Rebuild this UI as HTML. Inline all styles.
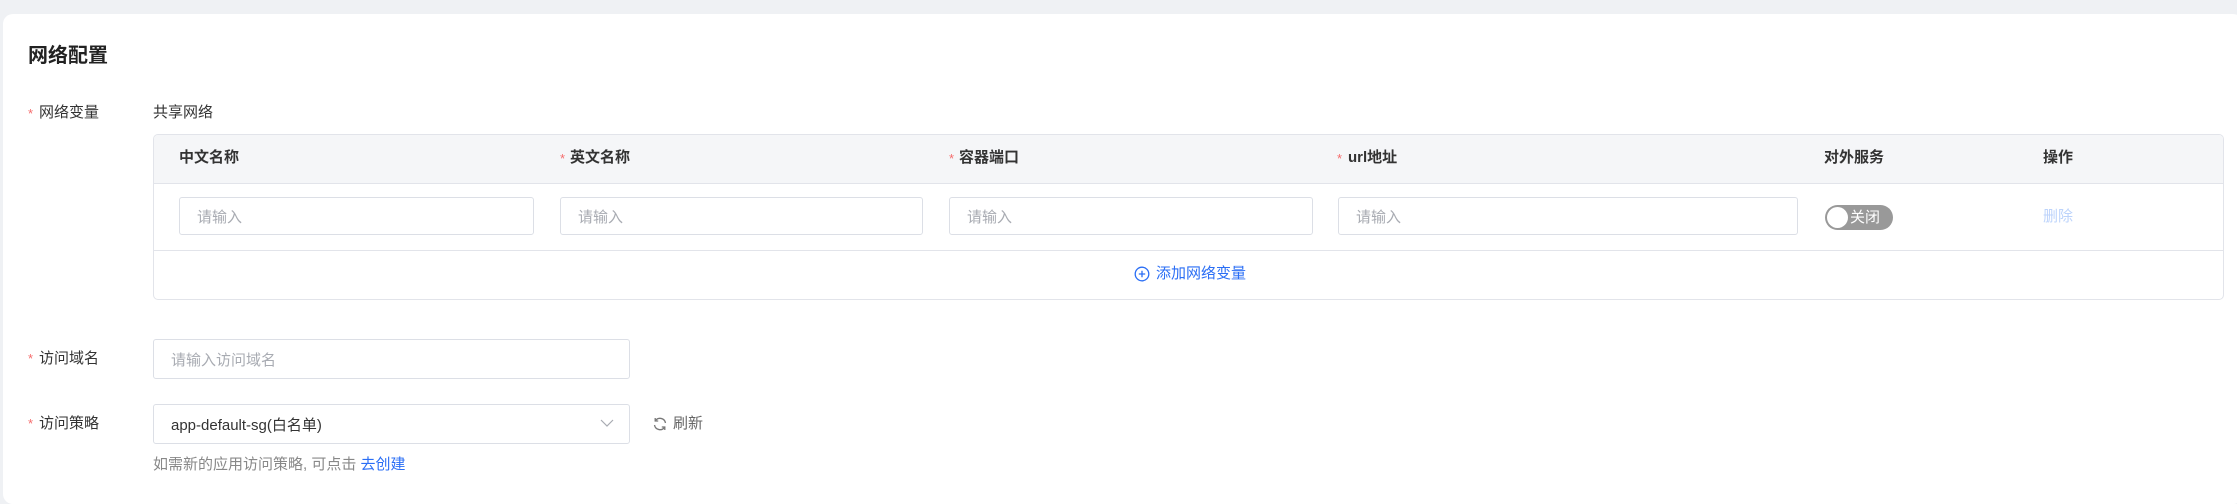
<!DOCTYPE html>
<html><head><meta charset="utf-8"><style>
*{box-sizing:border-box;margin:0;padding:0}
body{width:2237px;height:498px;background:#eff1f4;font-family:"Liberation Sans","Noto Sans CJK SC",sans-serif;position:relative;overflow:hidden;color:#333}
.card{position:absolute;left:3px;top:14px;width:2240px;height:490px;background:#fff;border-radius:10px}
.a{position:absolute;white-space:nowrap;line-height:1}
.lbl{font-size:15px;color:#333}
.star{color:#f56c6c;font-size:13px}
.title{font-size:20px;font-weight:bold;color:#222}
.th{font-size:15px;font-weight:bold;color:#333}
.inp{position:absolute;border:1px solid #dcdfe6;border-radius:3px;background:#fff;font-size:15px;color:#a8abb2;padding-left:17px;display:flex;align-items:center}
.tbl{position:absolute;left:153px;top:134px;width:2071px;height:166px;border:1px solid #e2e4ea;border-radius:5px;overflow:hidden}
.hd{position:absolute;left:0;top:0;right:0;height:49px;background:#f5f6f8;border-bottom:1px solid #e2e4ea}
.rw{position:absolute;left:0;top:49px;right:0;height:67px;border-bottom:1px solid #e2e4ea}
</style></head><body>
<div class="card"></div>
<div class="a title" style="left:28px;top:46px">网络配置</div>

<div class="a star" style="left:28px;top:107px">*</div>
<div class="a lbl" style="left:39px;top:105px">网络变量</div>
<div class="a lbl" style="left:153px;top:105px">共享网络</div>

<div class="tbl"><div class="hd"></div><div class="rw"></div></div>
<div class="a th" style="left:179px;top:150px">中文名称</div>
<div class="a star" style="left:560px;top:152px">*</div><div class="a th" style="left:570px;top:150px">英文名称</div>
<div class="a star" style="left:949px;top:152px">*</div><div class="a th" style="left:959px;top:150px">容器端口</div>
<div class="a star" style="left:1337px;top:152px">*</div><div class="a th" style="left:1348px;top:150px">url地址</div>
<div class="a th" style="left:1824px;top:150px">对外服务</div>
<div class="a th" style="left:2043px;top:150px">操作</div>

<div class="inp" style="left:179px;top:197px;width:355px;height:38px">请输入</div>
<div class="inp" style="left:560px;top:197px;width:363px;height:38px">请输入</div>
<div class="inp" style="left:949px;top:197px;width:364px;height:38px">请输入</div>
<div class="inp" style="left:1338px;top:197px;width:460px;height:38px">请输入</div>
<div class="a" style="left:1825px;top:205px;width:68px;height:25px;border-radius:13px;background:#999"></div>
<div class="a" style="left:1827px;top:207px;width:21px;height:21px;border-radius:50%;background:#fff"></div>
<div class="a" style="left:1850px;top:210px;font-size:15px;color:#fff">关闭</div>
<div class="a" style="left:2043px;top:209px;font-size:15px;color:#bcd3fb">删除</div>

<svg class="a" style="left:1134px;top:266px" width="16" height="16" viewBox="0 0 16 16"><circle cx="8" cy="8" r="6.8" fill="none" stroke="#2a6ef5" stroke-width="1.3"/><path d="M8 4.8v6.4M4.8 8h6.4" stroke="#2a6ef5" stroke-width="1.3"/></svg>
<div class="a" style="left:1156px;top:266px;font-size:15px;color:#2a6ef5">添加网络变量</div>

<div class="a star" style="left:28px;top:352px">*</div>
<div class="a lbl" style="left:39px;top:351px">访问域名</div>
<div class="inp" style="left:153px;top:339px;width:477px;height:40px">请输入访问域名</div>

<div class="a star" style="left:28px;top:417px">*</div>
<div class="a lbl" style="left:39px;top:416px">访问策略</div>
<div class="inp" style="left:153px;top:404px;width:477px;height:40px;color:#333">app-default-sg(白名单)</div>
<svg class="a" style="left:599px;top:417px" width="16" height="12" viewBox="0 0 16 12"><path d="M2 3l6 6 6-6" fill="none" stroke="#a8abb2" stroke-width="1.2"/></svg>
<svg class="a" style="left:652px;top:416px" width="16" height="16" viewBox="0 0 16 16"><path d="M13.5 7A5.6 5.6 0 0 0 3.2 5M2.5 9A5.6 5.6 0 0 0 12.8 11" fill="none" stroke="#777" stroke-width="1.3"/><path d="M3.2 2v3h3M12.8 14v-3h-3" fill="none" stroke="#777" stroke-width="1.3"/></svg>
<div class="a" style="left:673px;top:416px;font-size:15px;color:#666">刷新</div>

<div class="a" style="left:153px;top:457px;font-size:15px;color:#888">如需新的应用访问策略, 可点击 <span style="color:#2a6ef5">去创建</span></div>
</body></html>
